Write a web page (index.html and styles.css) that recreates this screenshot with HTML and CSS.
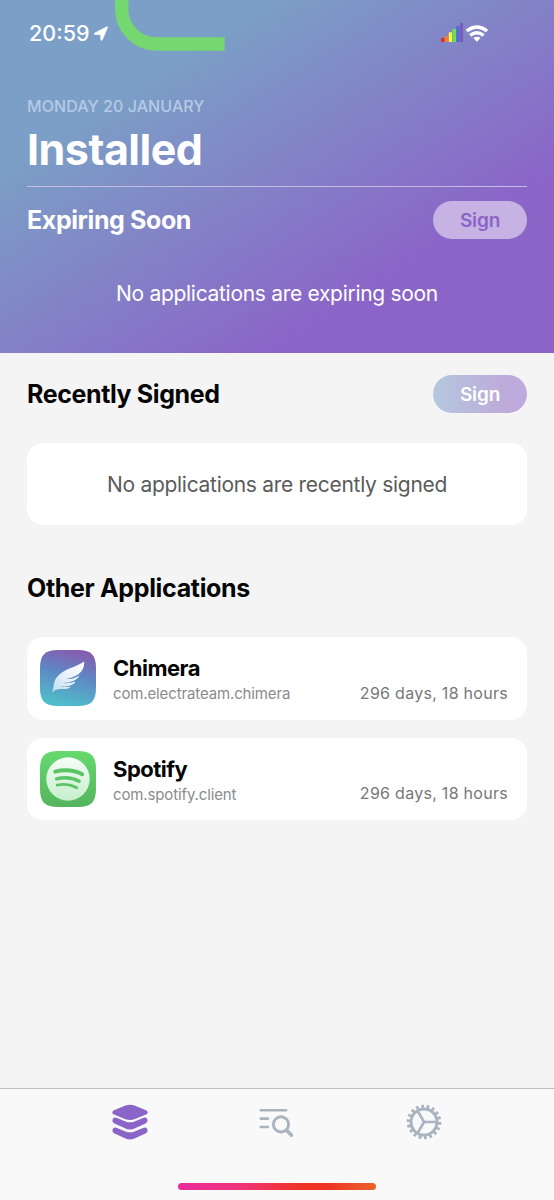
FILE: index.html
```html
<!DOCTYPE html>
<html lang="en">
<head>
<meta charset="utf-8">
<title>Installed</title>
<link rel="stylesheet" href="styles.css">
</head>
<body>
<div class="screen">
  <header class="hero">
    <svg class="notch-trace" width="112" height="52" viewBox="0 0 112 52"><path d="M6.700 0v9A35 35 0 0 0 41.700 44H109.700" fill="none" stroke="#74d770" stroke-width="13.400"/></svg>
    <div class="status">
      <span class="time">20:59</span>
      <svg class="location" width="16" height="16" viewBox="0 0 16 16"><path d="M14.600 1.200 9.300 13.600q-.9 2-1.500-.2V8.500H2.400Q-.4 8.100 2.100 6.900L13.500 1.100q1.300-.7 1.100.1Z" fill="#fff" stroke="#fff" stroke-width=".8" stroke-linejoin="round"/></svg>
      <svg class="signal" width="48" height="20" viewBox="0 0 48 20"><rect y="15" width="3.500" height="4" fill="#d72f32"/><rect x="3.800" y="12.800" width="3.500" height="6.200" fill="#ee7d36"/><rect x="7.800" y="9.300" width="3.200" height="9.700" fill="#fff43f"/><rect x="11.500" y="6" width="3.400" height="13" fill="#65e848"/><rect x="15.300" y="3" width="3.200" height="16" fill="#5867d3"/><rect x="18.900" y="0" width="3.200" height="19" fill="#765dba"/>
        <g fill="none" stroke="#fff" stroke-width="3.400"><path d="M25.700 8q10.200-7.800 20.400 0"/><path d="M29.200 12.300q6.700-5 13.400 0"/></g><path d="m32.300 15 3.600 3.700 3.600-3.700q-3.600-2.500-7.200 0Z" fill="#fff"/></svg>
    </div>
    <div class="date">MONDAY 20 JANUARY</div>
    <h1>Installed</h1>
    <div class="section-head expiring"><h2>Expiring Soon</h2><button class="sign sign-light">Sign</button></div>
    <p class="empty-light">No applications are expiring soon</p>
  </header>
  <main>
    <div class="section-head"><h2>Recently Signed</h2><button class="sign sign-gradient">Sign</button></div>
    <p class="card empty">No applications are recently signed</p>
    <h2 class="other">Other Applications</h2>
    <article class="card app">
      <svg class="app-icon" width="56" height="56" viewBox="0 0 56 56"><defs><linearGradient id="sky" x1=".65" y1="0" x2=".4" y2="1"><stop stop-color="#865bae"/><stop offset=".42" stop-color="#5f86c3"/><stop offset="1" stop-color="#4fbecb"/></linearGradient><linearGradient id="wing" x1="1" y1="0" x2="0" y2="1"><stop stop-color="#fff"/><stop offset=".6" stop-color="#e4eef7"/><stop offset="1" stop-color="#b6ddec"/></linearGradient></defs>
        <path d="M18 0H38C51 0 56 5 56 18V38C56 51 51 56 38 56H18C5 56 0 51 0 38V18C0 5 5 0 18 0Z" fill="url(#sky)"/>
        <path d="M44.200 11.600C37 16.500 27 18.500 20 24C12.500 30 15 34 12 43C15.500 38 20 39.300 27 38.700Q29.500 38.300 30.500 36.600Q25 37.600 20.500 36.600Q30 36.800 34.500 33.200L35.500 31.500Q29 34 23 33Q34 32.300 38.300 27.500L39.500 25.400Q33 29.500 26 29Q37 27 41.700 21Q44.500 17 44.200 11.600Z" fill="url(#wing)"/></svg>
      <div class="app-info"><h3>Chimera</h3><p>com.electrateam.chimera</p></div>
      <span class="expires">296 days, 18 hours</span>
    </article>
    <article class="card app">
      <svg class="app-icon" width="56" height="56" viewBox="0 0 56 56"><defs><linearGradient id="leaf" x2="0" y2="1"><stop stop-color="#67d970"/><stop offset="1" stop-color="#55b45e"/></linearGradient><linearGradient id="mint" x2="0" y2="1"><stop stop-color="#f6fdf7"/><stop offset="1" stop-color="#c5efcc"/></linearGradient></defs>
        <path d="M18 0H38C51 0 56 5 56 18V38C56 51 51 56 38 56H18C5 56 0 51 0 38V18C0 5 5 0 18 0Z" fill="url(#leaf)"/><circle cx="28" cy="28" r="21.700" fill="url(#mint)"/><g fill="none" stroke="#5bc566" stroke-linecap="round"><path d="M15.300 20.600Q30 17 42.200 23.200" stroke-width="4"/><path d="M16.600 27.800Q29 24.800 39.200 30.200" stroke-width="3.400"/><path d="M17.200 34.200Q27.600 31.900 36.800 36.700" stroke-width="2.800"/></g></svg>
      <div class="app-info"><h3>Spotify</h3><p>com.spotify.client</p></div>
      <span class="expires">296 days, 18 hours</span>
    </article>
  </main>
  <nav class="tabs">
    <div class="tab-row">
      <svg width="36" height="36" viewBox="0 0 36 36"><g fill="#8b64c8"><path d="M1.400 6.600 13.500 1.600Q18 0 22.500 1.600L34.600 6.600Q36.800 8.500 34.600 10.200L22.500 15.200Q18 16.800 13.500 15.200L1.400 10.200Q-.8 8.500 1.400 6.600Z"/><path d="M1.200 14.300Q2.500 13 5 14L13.500 17.400Q18 19.200 22.500 17.400L31 14Q33.500 13 34.800 14.300Q36.700 17.300 34 19.200L22.500 24.600Q18 26.400 13.500 24.600L2 19.200Q-.7 17.300 1.200 14.300Z"/><path d="M1.200 24.200Q2.500 23 5 24L13.500 27.400Q18 29.200 22.500 27.400L31 24Q33.500 23 34.800 24.200Q36.700 27.200 34 29.200L22.500 34.500Q18 36.600 13.500 34.500L2 29.200Q-.7 27.200 1.200 24.200Z"/></g></svg>
      <svg width="36" height="36" viewBox="0 0 36 36"><g fill="none" stroke="#aab4c1" stroke-linecap="round" stroke-width="2.600"><path d="M1.800 6.200H27.200M1.800 14.600H9M1.800 23H9"/><circle cx="22" cy="20.400" r="7.600" stroke-width="2.900"/><path d="m27.900 26.600 4.600 4.600" stroke-width="3.600"/></g></svg>
      <svg width="36" height="36" viewBox="0 0 36 36"><g fill="none" stroke="#aab4c1"><circle cx="18" cy="18" r="15.500" pathLength="180" stroke-width="3.600" stroke-dasharray="5 5"/><circle cx="18" cy="18" r="13" stroke-width="3"/><path d="M31 18H18L11.500 6.700M18 18 11.500 29.300" stroke-width="2.700"/></g></svg>
    </div>
    <div class="home-indicator"></div>
  </nav>
</div>
</body>
</html>
```
FILE: styles.css
```css
* { box-sizing: border-box; }
body, h1, h2, h3, p { margin: 0; }
body { font-family: Inter, "Liberation Sans", sans-serif; background: #f4f4f4; color: #050505; }
.screen { width: 554px; height: 1200px; display: flex; flex-direction: column; overflow: hidden; }
.hero { position: relative; height: 353px; padding: 22px 27px 0; color: #fff; background: linear-gradient(to bottom right, #7b9fc6 24%, #8b64c8 75%); }
.notch-trace { position: absolute; left: 115px; top: 0; }
.status { display: flex; height: 24px; align-items: center; }
.time { font-size: 21.5px; font-weight: 500; line-height: 24px; padding-left: 2px; margin-top: -2px; }
.location { margin-left: 4px; margin-top: -1px; }
.signal { margin-left: auto; margin-right: 38px; margin-top: -3px; }
.date { margin-top: 50px; font-size: 16px; font-weight: 500; line-height: 20px; color: #b7cae5; letter-spacing: .08px; }
h1 { margin-top: 7px; height: 64px; font-size: 43px; font-weight: 700; line-height: 52px; border-bottom: 1px solid #c5bce2; letter-spacing: -.5px; }
h2 { font-size: 25px; font-weight: 650; line-height: 32px; letter-spacing: -.4px; }
.section-head { display: flex; align-items: center; justify-content: space-between; height: 38px; }
.expiring { margin-top: 14px; }
.sign { width: 94px; height: 38px; border: 0; border-radius: 19px; padding: 1px 0 0; font: 600 19px/37px Inter, sans-serif; letter-spacing: -.15px; }
.sign-light { background: #c6b2e3; color: #8b64c8; }
.sign-gradient { background: linear-gradient(90deg, #b4c8de, #bdabd9 75%, #bfa9de); color: #fff; }
.empty-light { margin-top: 40px; text-align: center; font-size: 21px; line-height: 30px; letter-spacing: -.3px; }
main { flex: 1; padding: 22px 27px 0; }
.card { background: #fff; border-radius: 16px; }
.empty { margin-top: 30px; height: 82px; text-align: center; font-size: 21px; line-height: 83px; color: #5b5b5b; letter-spacing: -.29px; }
.other { margin: 47px 0 33px; letter-spacing: -.34px; }
.app { display: flex; align-items: center; height: 82.500px; padding: 0 19px 0 13px; margin-bottom: 18px; }
.app-icon { flex: none; }
.app-info { margin-left: 17px; flex: 1; }
h3 { font-size: 22px; font-weight: 650; line-height: 27px; letter-spacing: -.5px; padding-top: 2px; }
.app-info p { font-size: 15px; line-height: 19px; margin-top: 2px; color: #8b8b8b; letter-spacing: -.13px; }
.expires { font-size: 16px; color: #777; line-height: 20px; margin-top: 29px; letter-spacing: .28px; }
.tabs { flex: none; height: 112px; background: #f9f9f9; border-top: 1px solid #bcbcbd; }
.tab-row { display: flex; justify-content: space-between; height: 51px; padding: 15px 112px 0; }
.home-indicator { width: 198px; height: 7px; margin: 43px auto 0; border-radius: 4px; background: linear-gradient(90deg, #e92c9b, #f0357e 30%, #ee3324 62%, #ee3324 75%, #eb642b); }
```
